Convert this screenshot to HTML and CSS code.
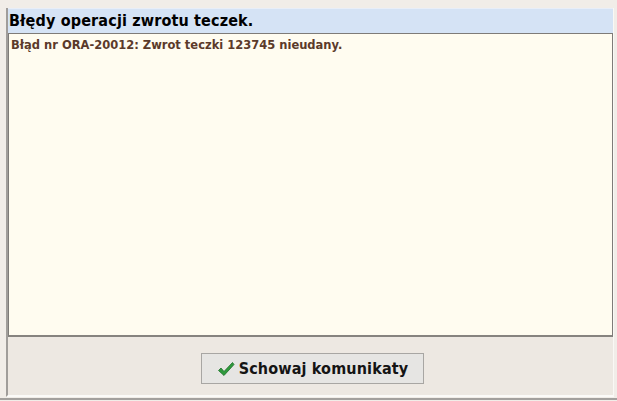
FILE: index.html
```html
<!DOCTYPE html>
<html lang="pl">
<head>
<meta charset="utf-8">
<link rel="stylesheet" href="styles.css">
</head>
<body>
<div class="frame">
  <div class="title">Błędy operacji zwrotu teczek.</div>
  <div class="messages">
    <div class="msg">Błąd nr ORA-20012: Zwrot teczki 123745 nieudany.</div>
  </div>
  <div class="footer">
    <button class="btn" type="button">
      <svg class="check" width="18" height="16" viewBox="0 0 18 16"><path d="M1.5 9.5 L4 7 L7 10.5 L15.5 1.5 L17 3.5 L7 14.5 Z" fill="#2f9a3c" stroke="#1d6e29" stroke-width="0.8" stroke-linejoin="round"/></svg>
      <span>Schowaj komunikaty</span>
    </button>
  </div>
</div>
<div class="baseline"></div>
</body>
</html>
```
FILE: styles.css
```css
html, body {
  margin: 0;
  padding: 0;
  background: #f1ede8;
  width: 617px;
  height: 401px;
  overflow: hidden;
}
body {
  display: flex;
  flex-direction: column;
  font-family: "DejaVu Sans Condensed", "DejaVu Sans", Verdana, sans-serif;
}
.frame {
  margin: 8px 3px 0 6px;
  height: 387px;
  border-left: 2px solid #a09d9a;
  border-right: 1px solid #faf8f5;
  border-bottom: 2px solid #fbfaf8;
  display: flex;
  flex-direction: column;
  background: #ede8e2;
}
.title {
  height: 25px;
  background: #d5e3f5;
  border-top: 1px solid #e8eef8;
  font-weight: bold;
  font-size: 16px;
  letter-spacing: 0.15px;
  line-height: 24px;
  padding-left: 1px;
  color: #000;
  box-sizing: border-box;
}
.messages {
  height: 304px;
  box-sizing: border-box;
  background: #fffcf0;
  border: 1px solid #7e7b78;
  border-bottom: 2px solid #86837f;
  padding: 4px 2px;
}
.msg {
  font-family: "DejaVu Sans", Verdana, sans-serif;
  font-weight: bold;
  font-size: 11.5px;
  color: #5b3a2a;
  line-height: 14px;
}
.footer {
  flex: 1;
  display: flex;
  justify-content: center;
  align-items: flex-start;
  padding-top: 16px;
  padding-left: 4px;
}
.btn {
  width: 223px;
  height: 31px;
  background: #e6e5e3;
  border: 1px solid #a8a6a3;
  display: flex;
  align-items: center;
  justify-content: center;
  gap: 4px;
  font-family: inherit;
  font-weight: bold;
  font-size: 16px;
  letter-spacing: 0.15px;
  color: #141414;
  padding: 0;
}
.check { display: block; }
.baseline {
  height: 2px;
  margin-top: 1px;
  background: #a3a09d;
}
```
